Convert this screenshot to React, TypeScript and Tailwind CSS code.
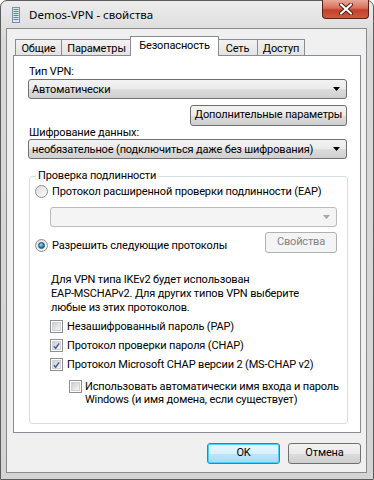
import React from "react";

const btnBg =
  "bg-[linear-gradient(to_bottom,#f2f2f2_0%,#ebebeb_50%,#dddddd_50%,#cfcfcf_100%)]";

function Arrow({ disabled }: { disabled?: boolean }) {
  return (
    <svg width="7" height="4" viewBox="0 0 7 4" className="shrink-0">
      <path d="M0 0h7L3.5 4z" fill={disabled ? "#a6a6a6" : "#000"} />
    </svg>
  );
}

function Combo({ value, disabled, className = "" }: { value?: string; disabled?: boolean; className?: string }) {
  return (
    <div
      className={`flex h-[20px] items-center justify-between rounded-[3px] border pl-[3px] pr-[6px] ${
        disabled ? "border-[#b8bcbf] bg-[#f4f4f4]" : `border-[#707070] ${btnBg}`
      } ${className}`}
    >
      <span className="whitespace-nowrap leading-[15px]">{value}</span>
      <Arrow disabled={disabled} />
    </div>
  );
}

function Radio({ checked, label }: { checked?: boolean; label: string }) {
  return (
    <div className="flex h-[15px] items-center gap-[4px]">
      <span className="flex h-[13px] w-[13px] items-center justify-center rounded-full border border-[#8e8f8f] bg-[linear-gradient(135deg,#dcdcdc,#fdfdfd)]">
        {checked && (
          <span className="h-[7px] w-[7px] rounded-full border border-[#1d4f75] bg-[radial-gradient(circle_at_40%_35%,#9fe0ff,#1b7fc4_60%,#0d4f86)]" />
        )}
      </span>
      <span className="whitespace-nowrap leading-[15px]">{label}</span>
    </div>
  );
}

function Check({ checked }: { checked?: boolean }) {
  return (
    <span className="flex h-[13px] w-[13px] shrink-0 items-center justify-center border border-[#8e8f8f] bg-white">
      <span className="flex h-[9px] w-[9px] items-center justify-center border border-[#d0d3d6] bg-[linear-gradient(135deg,#cbcfd5,#f6f6f6)]">
        {checked && (
          <svg width="8" height="8" viewBox="0 0 8 8">
            <path d="M1 4.2l2 2.3L7 1" fill="none" stroke="#4a5f97" strokeWidth="1.7" />
          </svg>
        )}
      </span>
    </span>
  );
}

function Tab({ label, width, active, first }: { label: string; width: number; active?: boolean; first?: boolean }) {
  const w: Record<number, string> = {
    47: "w-[47px]",
    71: "w-[71px]",
    89: "w-[89px]",
    41: "w-[41px]",
    48: "w-[48px]",
  };
  return (
    <div
      className={`${w[width]} flex items-center justify-center border border-b-0 border-[#898c95] ${
        active
          ? "relative z-10 -mb-px -ml-[2px] h-[20px] bg-white pb-[2px]"
          : `h-[16px] bg-[linear-gradient(to_bottom,#f2f2f2,#e3e3e3)] pt-px ${first ? "" : "-ml-px"}`
      }`}
    >
      <span className="whitespace-nowrap leading-[15px]">{label}</span>
    </div>
  );
}

export default function App() {
  return (
    <div className="relative flex h-[480px] w-[374px] flex-col rounded-t-[7px] border border-[#5c5c5c] bg-[linear-gradient(to_bottom,#ececec,#d9d9d9_40px,#d4d4d4)] font-['Roboto',sans-serif] text-[11px] tracking-[-0.15px] text-black">
      {/* title bar */}
      <div className="flex h-[27px] items-center pl-[11px]">
        <svg width="8" height="16" viewBox="0 0 8 16" className="mt-px">
          <rect x="0.5" y="0.5" width="7" height="15" fill="#dfe7f0" stroke="#7d8ea5" />
          <rect x="1.5" y="2" width="5" height="1" fill="#4f7fbf" />
          <rect x="1.5" y="4" width="5" height="1" fill="#4f7fbf" />
          <rect x="1.5" y="6" width="5" height="1" fill="#4f7fbf" />
          <rect x="1.5" y="8" width="5" height="1" fill="#4f7fbf" />
          <rect x="1.5" y="10" width="5" height="1" fill="#4f7fbf" />
          <rect x="1.5" y="12" width="5" height="1" fill="#4f7fbf" />
        </svg>
        <span className="ml-[9px] font-['Noto_Sans',sans-serif] text-[11.5px] leading-[15px] tracking-normal">Demos-VPN - свойства</span>
      </div>

      {/* close button */}
      <div className="absolute right-[4px] top-[-1px] flex h-[19px] w-[47px] items-center justify-center rounded-b-[4px] border border-t-0 border-[#5a2219] bg-[linear-gradient(to_bottom,#e8a898_0%,#d8705a_45%,#c4402a_55%,#d05a3e_100%)]">
        <svg width="14" height="12" viewBox="0 0 14 12">
          <path d="M2 1.5l10 9M12 1.5l-10 9" stroke="#4a1a12" strokeWidth="4" strokeLinecap="round" />
          <path d="M2 1.5l10 9M12 1.5l-10 9" stroke="#fff" strokeWidth="2.2" strokeLinecap="round" />
        </svg>
      </div>

      {/* client area */}
      <div className="mb-[6px] ml-[5px] mr-[6px] flex flex-1 flex-col border border-[#8a8a8a] bg-[#f0f0f0] pl-[6px] pr-[5px]">
        <div className="flex h-[26px] items-end pl-[2px]">
          <Tab label="Общие" width={47} first />
          <Tab label="Параметры" width={71} />
          <Tab label="Безопасность" width={89} active />
          <div className="-ml-[2px] flex">
            <Tab label="Сеть" width={41} first />
            <Tab label="Доступ" width={48} />
          </div>
        </div>

        {/* tab page */}
        <div className="flex h-[378px] flex-col border border-[#898c95] bg-white pl-[14px] pr-[13px]">
          <div className="mt-[8px] pl-px leading-[15px]">Тип VPN:</div>
          <Combo value="Автоматически" />
          <div className="mt-[6px] flex justify-end">
            <div className={`flex h-[21px] w-[157px] items-center justify-center whitespace-nowrap rounded-[3px] border border-[#707070] ${btnBg}`}>
              Дополнительные параметры
            </div>
          </div>
          <div className="h-[13px] pl-px leading-[13px]">Шифрование данных:</div>
          <Combo value="необязательное (подключиться даже без шифрования)" />

          {/* group box */}
          <div className="relative -mr-px ml-px mt-[17px] flex h-[248px] flex-col rounded-[3px] border border-[#d5dfe5] pl-[5px] pr-[10px]">
            <span className="absolute left-[6px] top-[-9px] bg-white px-[2px] leading-[15px]">Проверка подлинности</span>
            <div className="mt-[7px]">
              <Radio label="Протокол расширенной проверки подлинности (EAP)" />
            </div>
            <Combo disabled className="ml-[15px] mt-[8px]" />
            <div className="mt-[5px] flex items-end justify-between">
              <Radio checked label="Разрешить следующие протоколы" />
              <div className="flex h-[21px] w-[72px] items-center justify-center rounded-[3px] border border-[#adb2b5] bg-[#f4f4f4] text-[#838383]">
                Свойства
              </div>
            </div>
            <p className="mt-[20px] whitespace-nowrap pl-[16px] leading-[14px]">
              Для VPN типа IKEv2 будет использован
              <br />
              EAP-MSCHAPv2. Для других типов VPN выберите
              <br />
              любые из этих протоколов.
            </p>
            <div className="mt-[4px] flex flex-col gap-[4px] pl-[15px]">
              <div className="flex h-[15px] items-center gap-[4px]">
                <Check />
                <span className="whitespace-nowrap leading-[15px]">Незашифрованный пароль (PAP)</span>
              </div>
              <div className="flex h-[15px] items-center gap-[4px]">
                <Check checked />
                <span className="whitespace-nowrap leading-[15px]">Протокол проверки пароля (CHAP)</span>
              </div>
              <div className="flex h-[15px] items-center gap-[4px]">
                <Check checked />
                <span className="whitespace-nowrap leading-[15px]">Протокол Microsoft CHAP версии 2 (MS-CHAP v2)</span>
              </div>
            </div>
            <div className="mt-[8px] flex items-start gap-[3px] pl-[34px]">
              <Check />
              <span className="whitespace-nowrap leading-[13px]">
                Использовать автоматически имя входа и пароль
                <br />
                Windows (и имя домена, если существует)
              </span>
            </div>
          </div>
        </div>

        {/* dialog buttons */}
        <div className="mt-[10px] flex justify-end gap-[8px]">
          <div className="flex h-[21px] w-[73px] items-center justify-center rounded-[3px] border border-[#3c7fb1] bg-[linear-gradient(to_bottom,#eaf6fd_0%,#d9f0fc_50%,#bee6fd_50%,#a7d9f5_100%)] shadow-[inset_0_0_0_1px_#48d1fd]">
            OK
          </div>
          <div className={`flex h-[21px] w-[73px] items-center justify-center rounded-[3px] border border-[#707070] ${btnBg}`}>
            Отмена
          </div>
        </div>
      </div>
    </div>
  );
}
